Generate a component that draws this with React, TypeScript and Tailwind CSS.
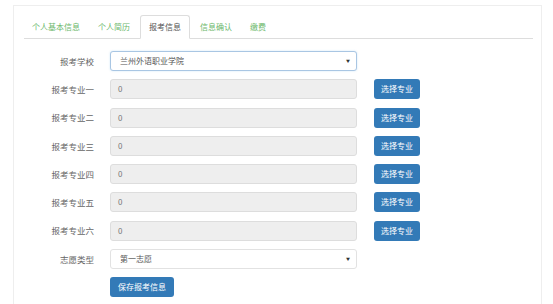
import React from "react";

const tabs = ["个人基本信息", "个人简历", "报考信息", "信息确认", "缴费"];
const majors = ["一", "二", "三", "四", "五", "六"];

function Caret() {
  return <span className="text-[4px] leading-none text-[#333]">▼</span>;
}

function Label({ children }: { children: React.ReactNode }) {
  return <div className="flex h-[20px] items-center justify-end text-[8.5px] text-[#666]">{children}</div>;
}

export default function App() {
  return (
    <div className="h-[304px] overflow-hidden bg-white pl-[13px] pt-[5px] font-['Noto_Sans_CJK_SC',sans-serif]">
      <div className="h-[320px] w-[529px] border border-[#eeeeee] pl-[10px] pr-[8px] pt-[9px]">
        {/* tabs */}
        <div className="flex gap-[2px] border-b border-[#dddddd]">
          {tabs.map((t, i) => (
            <div
              key={t}
              className={
                i === 2
                  ? "-mb-px flex h-[24px] items-center rounded-t-[3px] border border-[#dddddd] border-b-white bg-white px-[8px] text-[8px] text-[#555]"
                  : "flex h-[23px] items-center px-[8px] text-[8px] text-[#6cb86c]"
              }
            >
              {t}
            </div>
          ))}
        </div>

        {/* form */}
        <div className="mt-[12px] grid grid-cols-[70px_247px_47px] gap-x-[16px] gap-y-[8.3px]">
          <Label>报考学校</Label>
          <div className="flex h-[20px] items-center justify-between rounded-[3px] border border-[#a9c6e3] bg-white pl-[9px] pr-[6px] text-[8px] text-[#555] shadow-[0_0_2px_rgba(102,175,233,0.35)]">
            <span>兰州外语职业学院</span>
            <Caret />
          </div>
          <div />

          {majors.map((m) => (
            <React.Fragment key={m}>
              <Label>报考专业{m}</Label>
              <div className="flex h-[20px] items-center rounded-[3px] border border-[#dddddd] bg-[#eeeeee] pl-[7px] text-[8px] text-[#777]">
                0
              </div>
              <button className="ml-[1px] flex h-[20px] items-center justify-center rounded-[3px] bg-[#337ab7] text-[8px] text-white">
                选择专业
              </button>
            </React.Fragment>
          ))}

          <Label>志愿类型</Label>
          <div className="flex h-[20px] items-center justify-between rounded-[3px] border border-[#e2e2e2] bg-white pl-[9px] pr-[6px] text-[8px] text-[#555]">
            <span>第一志愿</span>
            <Caret />
          </div>
          <div />

          <div />
          <div>
            <button className="flex h-[20px] w-[64px] items-center justify-center rounded-[3px] bg-[#337ab7] text-[8px] text-white">
              保存报考信息
            </button>
          </div>
          <div />
        </div>
      </div>
    </div>
  );
}
